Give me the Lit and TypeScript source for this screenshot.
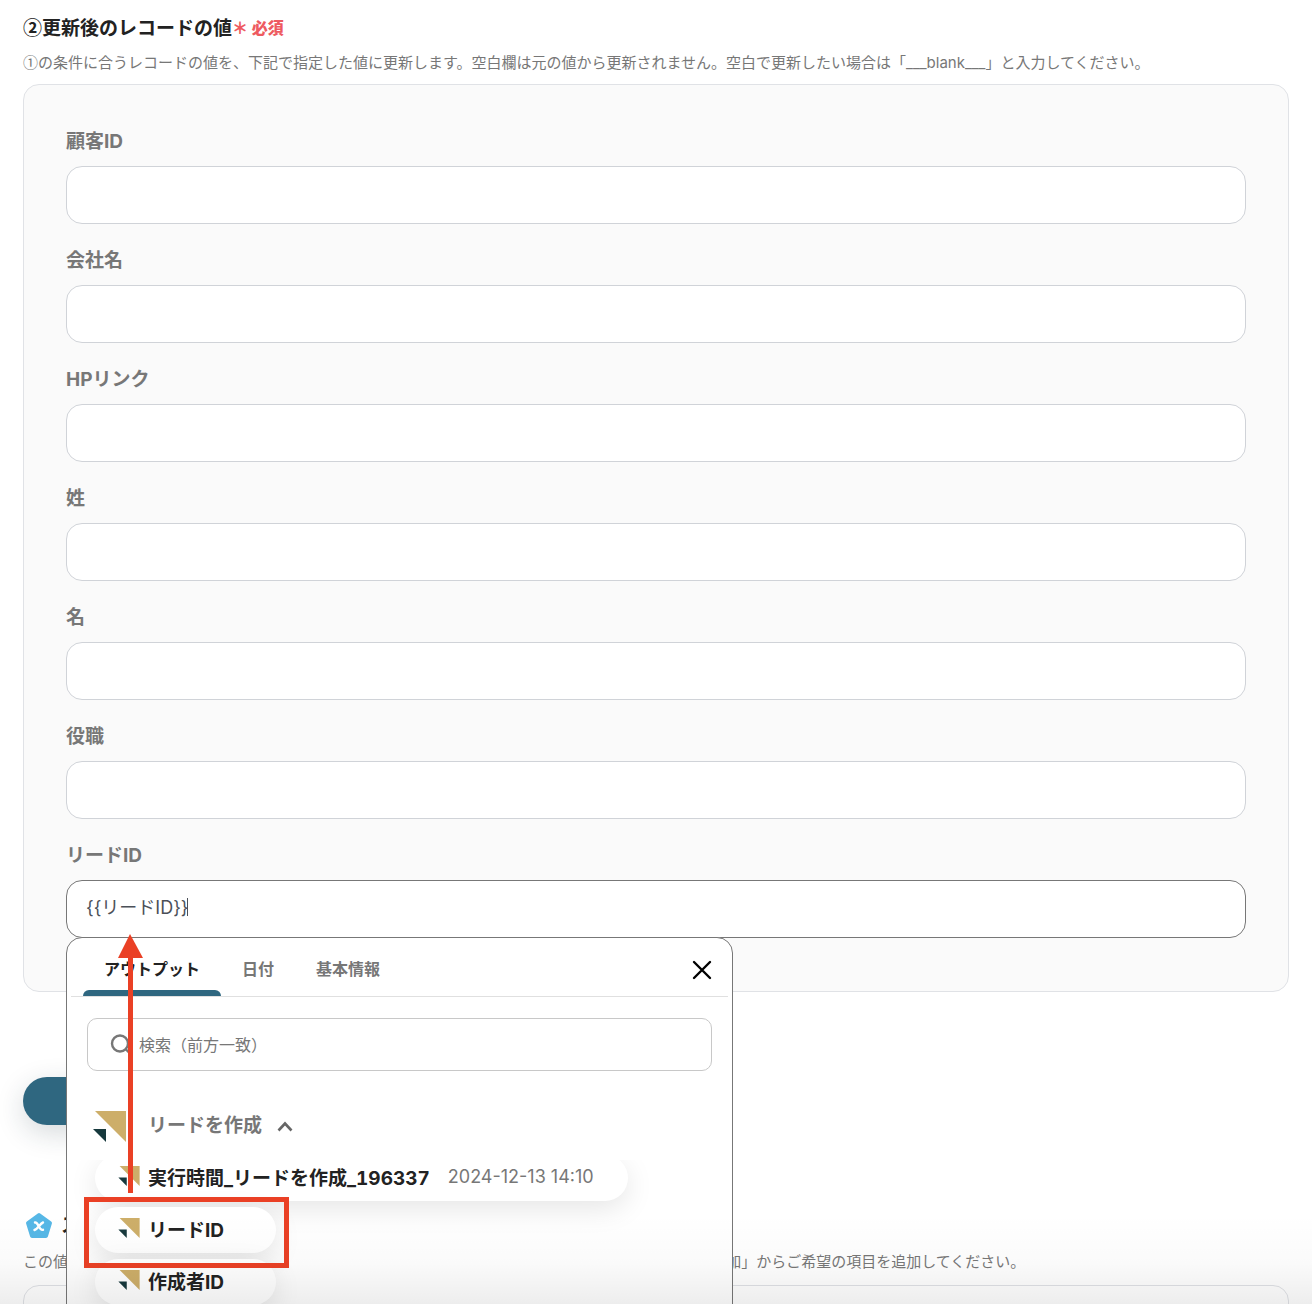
import { LitElement, html, css, svg } from "lit";
import { customElement, property, state } from "lit/decorators.js";

interface OutputItem {
  name: string;
  time: string;
}

const FIELDS = ["顧客ID", "会社名", "HPリンク", "姓", "名", "役職"];
const TABS = ["アウトプット", "日付", "基本情報"];
const ITEMS: OutputItem[] = [
  { name: "実行時間_リードを作成_196337", time: "2024-12-13 14:10" },
  { name: "リードID", time: "" },
  { name: "作成者ID", time: "" },
];

const brandShapes = svg`
  <path d="M2 0H33V31Z" fill="#cdae69"></path>
  <path d="M0 18H13V31Z" fill="#17393d"></path>
`;

@customElement("output-picker")
export class OutputPicker extends LitElement {
  @state() private active = 0;

  static styles = css`
    :host {
      display: block;
      box-sizing: border-box;
      overflow: hidden;
      border: 1px solid #777;
      border-radius: 16px;
      background: #fff;
    }
    button,
    input {
      font: inherit;
      color: inherit;
      border: 0;
      background: none;
      margin: 0;
      padding: 0;
    }
    .head {
      display: flex;
      align-items: stretch;
      justify-content: space-between;
      margin: 0 4px;
      padding: 0 12px;
      border-bottom: 1px solid #e0e0e0;
    }
    .tabs {
      display: flex;
    }
    .tab {
      height: 58px;
      padding: 10px 21px 0;
      border-bottom: 6px solid transparent;
      font-size: 16px;
      font-weight: 700;
      line-height: 24px;
      color: #777;
      position: relative;
    }
    .tab.on {
      color: #222;
    }
    .tab.on::after {
      content: "";
      position: absolute;
      left: 0;
      right: 0;
      bottom: -6px;
      height: 6px;
      border-radius: 6px 6px 0 0;
      background: #2f6780;
    }
    .close {
      display: flex;
      align-items: center;
      padding: 6px 4px 0;
      color: #000;
    }
    .search {
      display: flex;
      align-items: center;
      gap: 7px;
      height: 53px;
      box-sizing: border-box;
      margin: 21px 20px 0;
      padding: 0 22px;
      border: 1px solid #c8c8c8;
      border-radius: 10px;
    }
    .search input {
      flex: 1;
      min-width: 0;
      font-size: 16px;
      outline: none;
    }
    .search input::placeholder {
      color: #777;
      opacity: 1;
    }
    .group {
      display: flex;
      align-items: center;
      margin: 38px 26px 0;
      height: 34px;
      font-size: 19px;
      font-weight: 700;
      line-height: 28px;
      color: #777;
    }
    .group .name {
      margin: 0 14px 0 22px;
    }
    .list {
      overflow: hidden;
      margin: 17px 0 0;
      padding: 0 28px 40px;
    }
    .items {
      display: flex;
      flex-direction: column;
      align-items: flex-start;
      gap: 6px;
      margin: -5px 0 0;
      padding: 0;
      list-style: none;
    }
    .pill {
      display: flex;
      align-items: center;
      height: 46px;
      padding: 0 34px 4px 23px;
      border-radius: 24px;
      background: #fff;
      box-shadow: 0 8px 28px rgba(0, 0, 0, 0.1);
      white-space: nowrap;
    }
    .pill .name {
      margin: 0 18px 0 8px;
      font-size: 19px;
      font-weight: 700;
      font-variant-numeric: tabular-nums;
      color: #222;
    }
    .pill .time {
      font-size: 18px;
      color: #777;
    }
  `;

  render() {
    return html`
      <div class="head">
        <div class="tabs" role="tablist">
          ${TABS.map(
            (t, i) => html`<button
              class="tab ${i === this.active ? "on" : ""}"
              role="tab"
              aria-selected=${i === this.active}
              @click=${() => (this.active = i)}
            >${t}</button>`
          )}
        </div>
        <button class="close" aria-label="閉じる">
          <svg width="20" height="20" viewBox="0 0 20 20" fill="none" stroke="currentColor" stroke-width="2.4" stroke-linecap="round">
            <path d="M2 2L18 18M18 2L2 18"></path>
          </svg>
        </button>
      </div>
      <label class="search">
        <svg width="22" height="22" viewBox="0 0 22 22" fill="none" stroke="#777" stroke-width="2.4">
          <circle cx="10" cy="9.5" r="8"></circle>
          <path d="M15.5 15L20 19.5"></path>
        </svg>
        <input type="text" placeholder="検索（前方一致）" aria-label="検索" />
      </label>
      <div class="group">
        <svg width="33" height="31" viewBox="0 0 33 31">${brandShapes}</svg>
        <span class="name">リードを作成</span>
        <svg width="18" height="12" viewBox="0 0 18 12" fill="none" stroke="#666" stroke-width="2.600">
          <path d="M2.500 10.500L9 3.500L15.500 10.500"></path>
        </svg>
      </div>
      <div class="list">
        <ul class="items">
          ${ITEMS.map(
            (it) => html`<li>
              <button class="pill">
                <svg width="22" height="20" viewBox="0 0 33 31">${brandShapes}</svg>
                <span class="name">${it.name}</span>
                <span class="time">${it.time}</span>
              </button>
            </li>`
          )}
        </ul>
      </div>
    `;
  }
}

@customElement("record-field")
export class RecordField extends LitElement {
  @property() label = "";
  @property() value = "";
  @property({ type: Boolean }) editing = false;

  static styles = css`
    :host {
      display: flex;
      flex-direction: column;
      gap: 10px;
    }
    label {
      font-size: 19px;
      font-weight: 700;
      line-height: 28px;
      color: #777;
    }
    .box {
      position: relative;
    }
    input {
      display: block;
      box-sizing: border-box;
      width: 100%;
      height: 58px;
      margin: 0;
      padding: 0 19px 6px;
      border: 1px solid #d0d3d8;
      border-radius: 16px;
      background: #fff;
      font: inherit;
      font-size: 18px;
      color: #4b5058;
      outline: none;
    }
    input.editing {
      border-color: #777;
    }
    .caret {
      position: absolute;
      left: 121px;
      top: 18px;
      width: 1px;
      height: 18px;
      background: #4b5058;
    }
  `;

  render() {
    return html`
      <label for="f">${this.label}</label>
      <div class="box">
        <input id="f" type="text" class=${this.editing ? "editing" : ""} .value=${this.value} />
        ${this.editing ? html`<span class="caret"></span>` : ""}
        <slot></slot>
      </div>
    `;
  }
}

@customElement("app-root")
export class AppRoot extends LitElement {
  static styles = css`
    :host {
      display: block;
      position: relative;
      box-sizing: border-box;
      height: 100vh;
      overflow: hidden;
      padding: 13px 23px 0;
      background: #fff;
      color: #222;
      font-family: Inter, "Noto Sans CJK JP", sans-serif;
    }
    h2 {
      display: flex;
      align-items: center;
      margin: 0;
      font-size: 19px;
      font-weight: 700;
      line-height: 28px;
    }
    .cjk {
      font-family: "Noto Sans CJK JP", sans-serif;
    }
    .required {
      font-size: 16px;
      font-weight: 900;
      color: #ee5a60;
    }
    .note {
      margin: 9px 0;
      font-size: 15px;
      line-height: 24px;
      color: #777;
      white-space: nowrap;
    }
    .panel {
      display: flex;
      flex-direction: column;
      gap: 23px;
      padding: 43px 42px 53px;
      border: 1px solid #e0e2e6;
      border-radius: 16px;
      background: #fafafa;
    }
    output-picker {
      position: absolute;
      z-index: 2;
      top: calc(100% - 1px);
      left: 0;
      width: 667px;
      max-width: 100%;
    }
    .marks {
      position: absolute;
      z-index: 3;
      top: 100%;
      left: 0;
      overflow: visible;
      pointer-events: none;
    }
    .submit {
      display: block;
      width: 240px;
      height: 48px;
      margin: 85px 0 87px;
      border: 0;
      border-radius: 24px;
      background: #2f6780;
      box-shadow: 0 8px 28px rgba(30, 50, 60, 0.18);
    }
    .outputs {
      gap: 8px;
      padding-left: 2px;
    }
    .outputs + .note {
      margin: 10px 0 11px;
    }
    .next {
      height: 120px;
      background: #fff;
    }
    .fade {
      position: absolute;
      z-index: 4;
      left: 0;
      right: 0;
      bottom: 0;
      height: 90px;
      background: linear-gradient(rgba(0, 0, 0, 0), rgba(0, 0, 0, 0.02) 55%, rgba(0, 0, 0, 0.07));
      pointer-events: none;
    }
  `;

  render() {
    return html`
      <h2>
        <span class="cjk">②更新後のレコードの値</span>
        <span class="required cjk">＊ 必須</span>
      </h2>
      <p class="note">
        <span class="cjk">①</span>の条件に合うレコードの値を、下記で指定した値に更新します。空白欄は元の値から更新されません。空白で更新したい場合は「___blank___」と入力してください。
      </p>
      <section class="panel">
        ${FIELDS.map((f) => html`<record-field label=${f}></record-field>`)}
        <record-field label="リードID" value="{{リードID}}" editing>
          <output-picker></output-picker>
          <svg class="marks" width="230" height="332" viewBox="0 0 230 332">
            <path d="M64 -4L77 20H52Z" fill="#ea4025"></path>
            <path d="M64.500 18V255" stroke="#ea4025" stroke-width="5"></path>
            <rect x="20.500" y="261.500" width="200" height="66" fill="none" stroke="#ea4025" stroke-width="5"></rect>
          </svg>
        </record-field>
      </section>
      <button class="submit" aria-label="保存する"></button>
      <h2 class="outputs">
        <svg width="28" height="28" viewBox="0 0 28 28">
          <path d="M14 3L25 11L21 24H7L3 11Z" fill="#56b7e6" stroke="#56b7e6" stroke-width="4" stroke-linejoin="round"></path>
          <path d="M10 10.500C13.500 9.500 13.500 19 18 17.800M18 10.500C15 11.500 13 17 9.500 18" fill="none" stroke="#fff" stroke-width="2.400" stroke-linecap="round"></path>
        </svg>
        <span>ステップ</span>
      </h2>
      <p class="note">この値は後続のオペレーションで使用できます。取得したい項目がある場合は、下記「アウトプットを追加」からご希望の項目を追加してください。</p>
      <section class="panel next"></section>
      <div class="fade"></div>
    `;
  }
}
